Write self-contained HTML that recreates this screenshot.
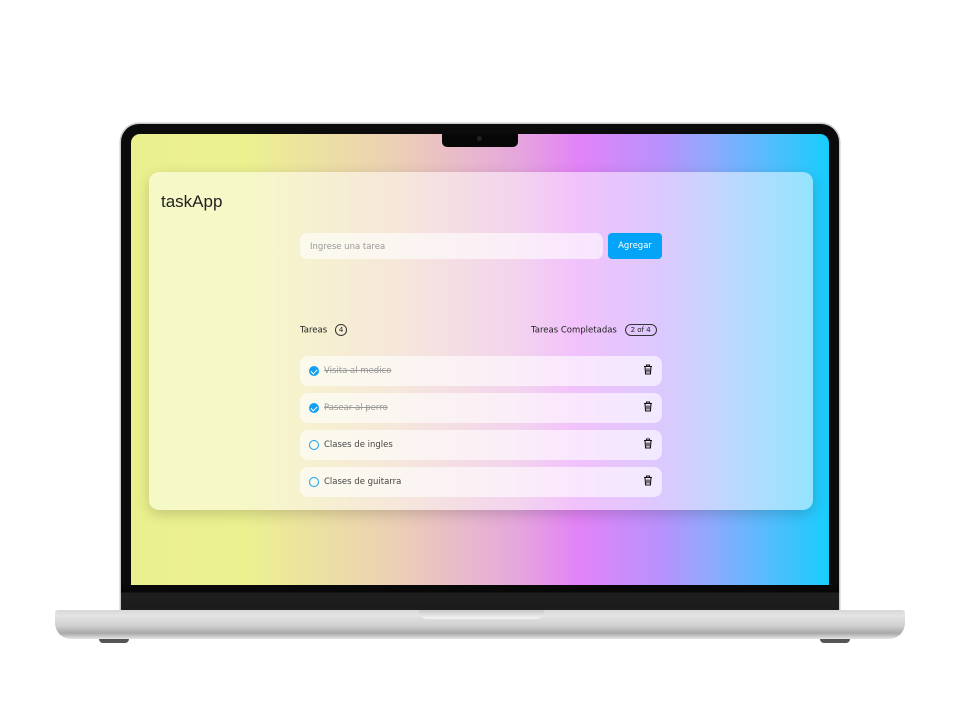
<!DOCTYPE html>
<html><head><meta charset="utf-8"><style>
*{margin:0;padding:0;box-sizing:border-box}
body{width:960px;height:720px;background:#fff;position:relative;overflow:hidden;font-family:"DejaVu Sans","Liberation Sans",sans-serif}
.frame{position:absolute;left:121px;top:124px;width:718px;height:486px;background:#0b0b0b;border-radius:18px 18px 0 0;box-shadow:0 0 0 1.5px #c9c9c9}
.screen{position:absolute;left:131px;top:134px;width:698px;height:451px;border-radius:9px 9px 0 0;overflow:hidden;
background:linear-gradient(90deg,#ebf08e 0%,#ecf18f 16%,#eccfb5 38%,#e6a8dc 55%,#e383f7 64%,#b792fc 76%,#8fa9fd 83%,#4fbefd 92%,#18cdfd 100%)}
.chin{position:absolute;left:121px;top:585px;width:718px;height:25px;background:linear-gradient(#080808 0,#080808 7px,#1e1e1e 8px,#1c1c1c 100%)}
.notch{position:absolute;left:442px;top:134px;width:76px;height:13px;background:#070707;border-radius:0 0 5px 5px}
.cam{position:absolute;left:477px;top:136px;width:5px;height:5px;border-radius:50%;background:#222}
.base{position:absolute;left:55px;top:610px;width:850px;height:29px;border-radius:3px 3px 16px 16px;
background:linear-gradient(#d8d8d8 0,#e4e4e4 20%,#cfcfcf 55%,#a9a9a9 80%,#e6e6e6 100%)}
.lip{position:absolute;left:419px;top:610px;width:125px;height:9px;background:linear-gradient(#c8c8c8,#f4f4f4);border-radius:0 0 8px 8px}
.foot{position:absolute;top:639px;width:30px;height:4px;background:#555;border-radius:0 0 4px 4px}
.card{position:absolute;left:149px;top:172px;width:664px;height:338px;border-radius:10px;background:rgba(255,255,255,.5);box-shadow:0 4px 14px rgba(0,0,0,.18)}
.title{position:absolute;left:161px;top:192px;font-size:17px;color:#222;font-family:"Liberation Sans",sans-serif}
.input{position:absolute;left:300px;top:233px;width:303px;height:26px;border-radius:7px;background:rgba(255,255,255,.6);font-size:8.5px;color:#999;padding:9px 10px}
.btn{position:absolute;left:608px;top:233px;width:54px;height:26px;border-radius:4px;background:#03a3f7;color:#fff;font-size:8.5px;text-align:center;line-height:27px}
.lbl{position:absolute;top:324px;font-size:8.5px;color:#222}
.pill{display:inline-block;border:1px solid #333;border-radius:8px;font-size:7px;padding:1px 5px;margin-left:5px;vertical-align:middle}
.row{position:absolute;left:300px;width:362px;height:30px;border-radius:8px;background:rgba(255,255,255,.6)}
.row .ck{position:absolute;left:9px;top:10px;width:10px;height:10px;border-radius:50%;border:1.5px solid #11a0f0}
.row .ck.on{background:#11a0f0}
.row .ck.on:after{content:"";position:absolute;left:2px;top:1px;width:3px;height:5px;border:solid #fff;border-width:0 1.3px 1.3px 0;transform:rotate(45deg)}
.row .t{position:absolute;left:24px;top:10px;font-size:8.5px;color:#444}
.row .t.done{color:#999;text-decoration:line-through}
.row svg{position:absolute;left:343px;top:8px}
</style></head><body>
<div class="frame"></div>
<div class="screen"></div>
<div class="chin"></div>
<div class="notch"></div><div class="cam"></div>
<div class="base"></div><div class="lip"></div>
<div class="foot" style="left:99px"></div><div class="foot" style="left:820px"></div>
<div class="card"></div>
<div class="title">taskApp</div>
<div class="input">Ingrese una tarea</div>
<div class="btn">Agregar</div>
<div class="lbl" style="left:300px">Tareas <span class="pill" style="border-radius:50%;padding:1px 3px">4</span></div>
<div class="lbl" style="left:531px">Tareas Completadas <span class="pill">2 of 4</span></div>
<div class="row" style="top:356px"><div class="ck on"></div><div class="t done">Visita al medico</div><svg width="10" height="11" viewBox="0 0 10 11"><path d="M1 2.5h8M3.5 2.5V1h3v1.5M2 2.5l.6 7.5h4.8L8 2.5M4 4.5v4M6 4.5v4" stroke="#111" stroke-width="1.1" fill="none"/></svg></div>
<div class="row" style="top:393px"><div class="ck on"></div><div class="t done">Pasear al perro</div><svg width="10" height="11" viewBox="0 0 10 11"><path d="M1 2.5h8M3.5 2.5V1h3v1.5M2 2.5l.6 7.5h4.8L8 2.5M4 4.5v4M6 4.5v4" stroke="#111" stroke-width="1.1" fill="none"/></svg></div>
<div class="row" style="top:430px"><div class="ck"></div><div class="t">Clases de ingles</div><svg width="10" height="11" viewBox="0 0 10 11"><path d="M1 2.5h8M3.5 2.5V1h3v1.5M2 2.5l.6 7.5h4.8L8 2.5M4 4.5v4M6 4.5v4" stroke="#111" stroke-width="1.1" fill="none"/></svg></div>
<div class="row" style="top:467px"><div class="ck"></div><div class="t">Clases de guitarra</div><svg width="10" height="11" viewBox="0 0 10 11"><path d="M1 2.5h8M3.5 2.5V1h3v1.5M2 2.5l.6 7.5h4.8L8 2.5M4 4.5v4M6 4.5v4" stroke="#111" stroke-width="1.1" fill="none"/></svg></div>
</body></html>
